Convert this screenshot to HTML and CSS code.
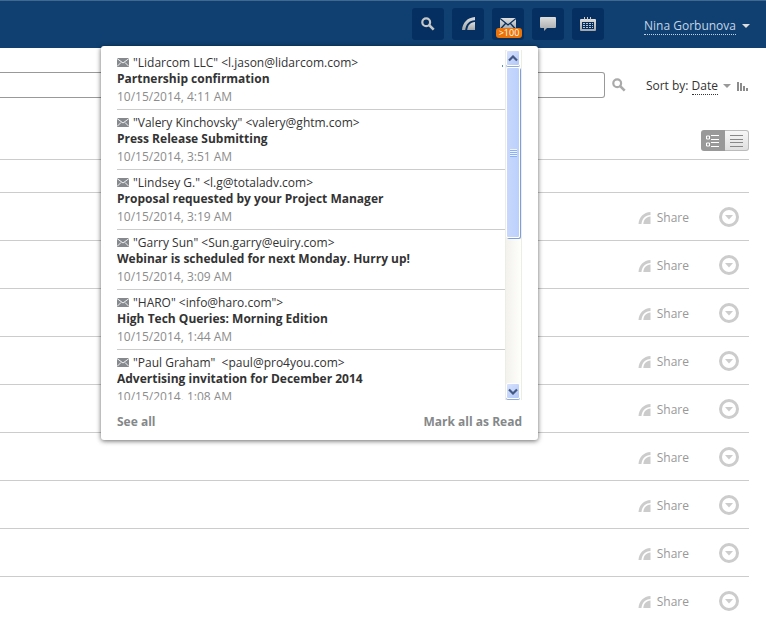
FILE: index.html
```html
<!DOCTYPE html>
<html lang="en">
<head>
<meta charset="utf-8">
<title>Portal feed</title>
<link rel="stylesheet" href="styles.css">
</head>
<body>
<svg class="defs" aria-hidden="true">
  <defs>
    <linearGradient id="silver" x1="0" y1="0" x2="0" y2="1"><stop offset="0" stop-color="#dedede"/><stop offset="1" stop-color="#a3a6a8"/></linearGradient>
    <symbol id="feed" viewBox="0 0 13 13"><path d="M13 0v3.200C7.300 3.400 4 7 3.200 13H0C.6 5.500 5.500.5 13 0z"/><path d="M13 5v8H5.200C5.600 8.500 8.200 5.400 13 5z"/></symbol>
    <symbol id="lens" viewBox="0 0 14 14"><circle cx="5.200" cy="5.200" r="3.900" fill="none" stroke="currentColor" stroke-width="2.200"/><path d="M8.200 8.200l4.500 4.500" stroke="currentColor" stroke-width="2.600" fill="none"/></symbol>
    <symbol id="mail" viewBox="0 0 12 9"><rect width="12" height="9" fill="#85888c"/><path d="M0 .5l6 4.500 6-4.500M0 8.500l4-4M12 8.500l-4-4" fill="none" stroke="#fff" stroke-width=".9"/></symbol>
    <symbol id="drop" viewBox="0 0 20 20"><circle cx="10" cy="10" r="8.500" fill="none" stroke="#ccc" stroke-width="3"/><path d="M6 8h8l-4 4.500z" fill="#ccc"/></symbol>
  </defs>
</svg>

<header class="topbar">
  <nav class="tools">
    <button class="tool" aria-label="Search"><svg width="14" height="14"><use href="#lens"/></svg></button>
    <button class="tool" aria-label="Feed"><svg width="13" height="13" fill="url(#silver)"><use href="#feed"/></svg></button>
    <button class="tool tool-mail" aria-label="Mail"><svg width="16" height="12" viewBox="0 0 16 12"><rect width="16" height="12" fill="url(#silver)"/><path d="M0 .5l8 6.500 8-6.500M0 11.500l5.500-6M16 11.500l-5.500-6" fill="none" stroke="#052f60" stroke-width="1.300"/></svg><span class="badge">&gt;100</span></button>
    <button class="tool" aria-label="Talk"><svg width="16" height="14" viewBox="0 0 16 14"><path d="M1 0h14q1 0 1 1v9q0 1-1 1H7l-3 3v-3H1q-1 0-1-1V1q0-1 1-1z" fill="url(#silver)"/></svg></button>
    <button class="tool" aria-label="Calendar"><svg width="16" height="14" viewBox="0 0 16 14"><path d="M1 2h14q1 0 1 1v10q0 1-1 1H1q-1 0-1-1V3q0-1 1-1z" fill="url(#silver)"/><path d="M2 5h12v7H2z" fill="#052f60"/><path d="M3 6h2v1H3zM6 6h2v1H6zM9 6h2v1H9zM12 6h1v1h-1zM3 8h2v1H3zM6 8h2v1H6zM9 8h2v1H9zM12 8h1v1h-1zM3 10h2v1H3zM6 10h2v1H6zM9 10h2v1H9zM12 10h1v1h-1z" fill="#c2c4c6"/><path d="M4.500 0v3M7.500 0v3M10.500 0v3" stroke="#ccc"/></svg></button>
  </nav>
  <a class="user" href="#"><span class="user-name">Nina Gorbunova</span><span class="caret"></span></a>

  <section class="popup" aria-label="New mail">
    <div class="popup-view">
      <ul class="mails">
        <li><p class="from"><svg width="12" height="9"><use href="#mail"/></svg>"Lidarcom LLC" &lt;l.jason@lidarcom.com&gt;<i class="speck"></i></p><a class="subject" href="#">Partnership confirmation</a><time>10/15/2014, 4:11 AM</time></li>
        <li><p class="from"><svg width="12" height="9"><use href="#mail"/></svg>"Valery Kinchovsky" &lt;valery@ghtm.com&gt;</p><a class="subject" href="#">Press Release Submitting</a><time>10/15/2014, 3:51 AM</time></li>
        <li><p class="from"><svg width="12" height="9"><use href="#mail"/></svg>"Lindsey G." &lt;l.g@totaladv.com&gt;</p><a class="subject" href="#">Proposal requested by your Project Manager</a><time>10/15/2014, 3:19 AM</time></li>
        <li><p class="from"><svg width="12" height="9"><use href="#mail"/></svg>"Garry Sun" &lt;Sun.garry@euiry.com&gt;</p><a class="subject" href="#">Webinar is scheduled for next Monday. Hurry up!</a><time>10/15/2014, 3:09 AM</time></li>
        <li><p class="from"><svg width="12" height="9"><use href="#mail"/></svg>"HARO" &lt;info@haro.com"&gt;</p><a class="subject" href="#">High Tech Queries: Morning Edition</a><time>10/15/2014, 1:44 AM</time></li>
        <li><p class="from"><svg width="12" height="9"><use href="#mail"/></svg>"Paul Graham"&nbsp; &lt;paul@pro4you.com&gt;</p><a class="subject" href="#">Advertising invitation for December 2014</a><time>10/15/2014, 1:08 AM</time></li>
      </ul>
      <div class="scroll">
        <button class="scroll-btn" aria-label="Scroll up"><svg width="10" height="7" viewBox="0 0 10 7"><path d="M1 5.500l4-4 4 4" fill="none" stroke="#445a85" stroke-width="2.200"/></svg></button>
        <div class="thumb"><span class="grip"></span></div>
        <button class="scroll-btn scroll-down" aria-label="Scroll down"><svg width="10" height="7" viewBox="0 0 10 7"><path d="M1 1.500l4 4 4-4" fill="none" stroke="#445a85" stroke-width="2.200"/></svg></button>
      </div>
    </div>
    <div class="popup-foot"><a href="#">See all</a><a href="#">Mark all as Read</a></div>
  </section>
</header>

<main class="page">
  <div class="filter">
    <input class="query" type="text" aria-label="Filter">
    <button class="go" aria-label="Find"><svg width="14" height="14"><use href="#lens"/></svg></button>
    <div class="sort">Sort by: <a href="#">Date</a><span class="caret"></span><svg width="11" height="9" viewBox="0 0 11 9"><path d="M0 0h2v9H0zM3 1h2v8H3zM6 4h2v5H6zM9 6h2v3H9z" fill="#8c8c8c"/></svg></div>
  </div>
  <div class="views">
    <button class="view view-on" aria-label="Detailed view"><svg width="14" height="12" viewBox="0 0 14 12"><path d="M.5 1h3v3h-3zM.5 8h3v3h-3zM5 .5h8M5 4.500h8M5 7.500h8M5 11.500h8" fill="none" stroke="#fff"/></svg></button><button class="view" aria-label="Compact view"><svg width="13" height="12" viewBox="0 0 13 12"><path d="M0 .5h13M0 4.500h13M0 7.500h13M0 11.500h13" stroke="#888" fill="none"/></svg></button>
  </div>
  <div class="head-row"></div>
  <ul class="rows">
    <li><a class="share" href="#"><svg width="13" height="12"><use href="#feed"/></svg>Share</a><button class="more" aria-label="More"><svg width="20" height="20"><use href="#drop"/></svg></button></li>
    <li><a class="share" href="#"><svg width="13" height="12"><use href="#feed"/></svg>Share</a><button class="more" aria-label="More"><svg width="20" height="20"><use href="#drop"/></svg></button></li>
    <li><a class="share" href="#"><svg width="13" height="12"><use href="#feed"/></svg>Share</a><button class="more" aria-label="More"><svg width="20" height="20"><use href="#drop"/></svg></button></li>
    <li><a class="share" href="#"><svg width="13" height="12"><use href="#feed"/></svg>Share</a><button class="more" aria-label="More"><svg width="20" height="20"><use href="#drop"/></svg></button></li>
    <li><a class="share" href="#"><svg width="13" height="12"><use href="#feed"/></svg>Share</a><button class="more" aria-label="More"><svg width="20" height="20"><use href="#drop"/></svg></button></li>
    <li><a class="share" href="#"><svg width="13" height="12"><use href="#feed"/></svg>Share</a><button class="more" aria-label="More"><svg width="20" height="20"><use href="#drop"/></svg></button></li>
    <li><a class="share" href="#"><svg width="13" height="12"><use href="#feed"/></svg>Share</a><button class="more" aria-label="More"><svg width="20" height="20"><use href="#drop"/></svg></button></li>
    <li><a class="share" href="#"><svg width="13" height="12"><use href="#feed"/></svg>Share</a><button class="more" aria-label="More"><svg width="20" height="20"><use href="#drop"/></svg></button></li>
    <li><a class="share" href="#"><svg width="13" height="12"><use href="#feed"/></svg>Share</a><button class="more" aria-label="More"><svg width="20" height="20"><use href="#drop"/></svg></button></li>
  </ul>
</main>
</body>
</html>
```
FILE: styles.css
```css
* { box-sizing: border-box; }
body {
  margin: 0;
  background: #fff;
  color: #333;
  font: 12px/18px "Open Sans", "Liberation Sans", sans-serif;
}
.defs { position: absolute; width: 0; height: 0; }
svg { display: block; flex: none; }
a { color: inherit; text-decoration: none; }
ul, p { margin: 0; padding: 0; list-style: none; }
button { padding: 0; border: 0; background: none; font: inherit; color: inherit; }

.topbar {
  position: relative;
  display: flex;
  align-items: center;
  justify-content: flex-end;
  height: 48px;
  padding-right: 16px;
  border-top: 1px solid #41698f;
  background: #0f4071;
}
.tools { display: flex; gap: 8px; margin: 0 40px 2px 0; }
.tool {
  position: relative;
  display: flex;
  align-items: center;
  justify-content: center;
  width: 32px;
  height: 32px;
  border-radius: 3px;
  background: #052f60;
  color: #c4c6c8;
}
.badge {
  position: absolute;
  left: 4px;
  bottom: 2px;
  width: 26px;
  border-radius: 3px;
  background: #ec7306;
  color: #fff;
  font-size: 9px;
  line-height: 10px;
}
.user { display: flex; align-items: center; gap: 6px; padding-top: 2px; color: #c3d5e6; }
.user-name { border-bottom: 1px dotted #c3d5e6; line-height: 17px; }
.caret {
  border: 4px solid transparent;
  border-top-color: currentColor;
  border-bottom: 0;
}
.user .caret { color: #ddd; }

.popup {
  position: absolute;
  z-index: 2;
  top: 45px;
  right: 228px;
  width: 437px;
  padding: 4px 16px 9px;
  border-radius: 3px;
  background: #fff;
  box-shadow: 0 1px 5px rgba(0, 0, 0, .6);
}
.popup-view { display: flex; height: 350px; }
.mails { flex: 1; overflow: hidden; }
.mails li { height: 60px; padding: 5px 0 2px; border-bottom: 1px solid #ccc; }
.from { display: flex; align-items: center; gap: 4px; line-height: 16px; white-space: pre; }
.from svg { margin-bottom: 2px; }
.speck { width: 1px; height: 2px; margin: 6px 2px 0 auto; background: #4d9ab5; }
.subject { display: block; line-height: 16px; font-weight: 700; }
time { display: block; line-height: 20px; color: #8c8c8c; }
.scroll {
  display: flex;
  flex-direction: column;
  gap: 1px;
  width: 17px;
  padding-right: 1px;
  border-left: 1px solid #eeede5;
  border-right: 1px solid #eeede5;
  background: linear-gradient(90deg, #f3f2ed, #fefefb);
}
.scroll-btn {
  display: flex;
  align-items: center;
  justify-content: center;
  height: 16px;
  border: 1px solid #fff;
  border-radius: 2px;
  background: linear-gradient(135deg, #d7e2fd, #b2c8f7);
  box-shadow: 0 1px #8eaae0;
}
.scroll-down { margin: auto 0 1px; }
.thumb {
  display: flex;
  align-items: center;
  justify-content: center;
  height: 171px;
  border: 1px solid #fff;
  border-radius: 2px;
  background: linear-gradient(90deg, #c9d8fc, #bad0fc);
  box-shadow: 1px 1px #7f9fd8;
}
.grip {
  width: 7px;
  height: 8px;
  background: repeating-linear-gradient(#eef4fe 0 1px, #8cb0f8 1px 2px);
}
.popup-foot {
  display: flex;
  justify-content: space-between;
  padding-top: 13px;
  color: #85888a;
  font-weight: 700;
}

.page { padding-right: 17px; }
.filter { display: flex; align-items: center; padding-top: 24px; }
.query {
  flex: 1;
  min-width: 0;
  height: 26px;
  border: 1px solid #999;
  border-left: 0;
  border-radius: 0 3px 3px 0;
  font: inherit;
}
.go { margin: 0 20px 0 7px; color: #aaa; }
.sort { display: flex; align-items: center; padding: 2px 1px 0 0; white-space: pre; }
.sort a { border-bottom: 1px dotted #333; line-height: 17px; }
.sort .caret { margin: 0 6px 0 5px; color: #999; }
.views { display: flex; justify-content: flex-end; padding: 32px 0 8px; }
.view {
  display: flex;
  align-items: center;
  justify-content: center;
  width: 24px;
  height: 21px;
  border: 1px solid #bbb;
  border-left: 0;
  border-radius: 0 3px 3px 0;
  background: linear-gradient(#f6f6f6, #e0e0e0);
}
.view-on { border: 0; border-radius: 3px 0 0 3px; background: #999; }
.head-row { height: 34px; border: solid #ccc; border-width: 1px 0; }
.rows li {
  display: flex;
  align-items: center;
  justify-content: flex-end;
  gap: 30px;
  height: 48px;
  padding-right: 10px;
  border-bottom: 1px solid #ccc;
}
.rows li:last-child { border-bottom-color: transparent; }
.share { display: flex; align-items: center; gap: 6px; padding-top: 2px; color: #999; }
.share svg { fill: #ccc; }
```
